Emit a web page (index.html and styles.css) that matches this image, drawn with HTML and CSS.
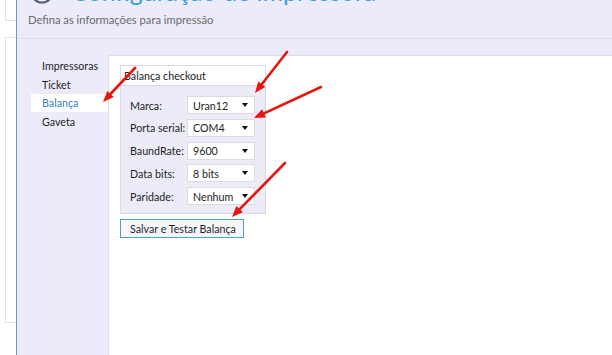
FILE: index.html
```html
<!DOCTYPE html>
<html lang="pt">
<head>
<meta charset="utf-8">
<title>Configuração de impressora</title>
<link rel="stylesheet" href="styles.css">
</head>
<body>
<div class="screen">
  <div class="side">
    <div class="side-box side-top"></div>
    <div class="side-box side-main"></div>
  </div>
  <div class="window">
    <header class="header">
      <div class="title-row">
        <svg class="title-icon" width="24" height="24" viewBox="0 0 24 24"><circle cx="12" cy="12" r="10.5" fill="none" stroke="#4f5f72" stroke-width="2"/></svg>
        <h1 class="title">Configuração de impressora</h1>
      </div>
      <p class="subtitle">Defina as informações para impressão</p>
    </header>
    <div class="body">
      <nav class="nav">
        <div class="nav-item">Impressoras</div>
        <div class="nav-item">Ticket</div>
        <div class="nav-item active">Balança</div>
        <div class="nav-item">Gaveta</div>
      </nav>
      <div class="main">
        <div class="strip"></div>
        <div class="content">
          <section class="group">
            <div class="group-head">Balança checkout</div>
            <div class="group-body">
              <div class="row"><span class="label">Marca:</span><div class="combo"><span>Uran12</span><i class="caret"></i></div></div>
              <div class="row"><span class="label">Porta serial:</span><div class="combo"><span>COM4</span><i class="caret"></i></div></div>
              <div class="row"><span class="label">BaundRate:</span><div class="combo"><span>9600</span><i class="caret"></i></div></div>
              <div class="row"><span class="label">Data bits:</span><div class="combo"><span>8 bits</span><i class="caret"></i></div></div>
              <div class="row"><span class="label">Paridade:</span><div class="combo"><span>Nenhum</span><i class="caret"></i></div></div>
            </div>
          </section>
          <button class="btn">Salvar e Testar Balança</button>
        </div>
      </div>
    </div>
  </div>
  <svg class="arrows" width="612" height="355" viewBox="0 0 612 355">
    <g stroke="#e8150e" stroke-width="2.6" stroke-linecap="round" fill="none">
      <line x1="287" y1="52" x2="261.8" y2="84.3"/>
      <line x1="321" y1="87" x2="264" y2="113.4"/>
      <line x1="135" y1="68" x2="110.5" y2="94"/>
      <line x1="285" y1="163" x2="239.7" y2="209.2"/>
    </g>
    <g fill="#e8150e">
      <polygon points="265.3,87.1 258.2,81.6 255,93"/>
      <polygon points="265.9,117.5 262.1,109.3 254,118"/>
      <polygon points="113.8,97.1 107.3,90.9 103,102"/>
      <polygon points="242.9,212.3 236.5,206 232,217"/>
    </g>
  </svg>
</div>
</body>
</html>
```
FILE: styles.css
```css
* { box-sizing: border-box; }
html, body { margin: 0; padding: 0; }
body {
  width: 612px;
  height: 355px;
  overflow: hidden;
  background: #ffffff;
  font-family: Lato, "Open Sans", sans-serif;
  font-size: 10.7px;
  color: #1e1e1e;
}
.screen {
  position: relative;
  display: flex;
  width: 612px;
  height: 355px;
}
.side {
  width: 16px;
  flex: none;
  display: flex;
  flex-direction: column;
  padding-left: 5px;
}
.side-box { border-left: 1px solid #e2e2e2; }
.side-top { height: 21px; border-bottom: 1px solid #e2e2e2; }
.side-main {
  margin-top: 16px;
  height: 286px;
  border-top: 1px solid #e6e6e6;
  border-bottom: 1px solid #e2e2e2;
}
.window {
  flex: 1;
  display: flex;
  flex-direction: column;
  background: #ebebfa;
  border-left: 1px solid #5d9ed3;
}
.header {
  height: 39px;
  flex: none;
  border-bottom: 1px solid #dcdcea;
  padding-left: 11px;
  overflow: hidden;
}
.title-row {
  display: flex;
  align-items: flex-start;
  height: 30px;
  margin-top: -24px;
  margin-left: 2px;
}
.title-icon { flex: none; margin-top: 4px; }
.title {
  margin: 0 0 0 17px;
  font-weight: 400;
  font-size: 25px;
  line-height: 30px;
  color: #3d9fd8;
  white-space: nowrap;
}
.subtitle {
  margin: 7px 0 0 0;
  color: #6a6a6a;
  font-size: 11.2px;
  line-height: 14px;
  white-space: nowrap;
}
.body {
  flex: 1;
  display: flex;
}
.nav {
  width: 91px;
  flex: none;
  padding: 17px 0 0 14px;
  display: flex;
  flex-direction: column;
}
.nav-item {
  height: 19px;
  line-height: 19px;
  padding-left: 11px;
  color: #1e1e1e;
  white-space: nowrap;
}
.nav-item.active {
  background: #ffffff;
  color: #2f7fc8;
  height: 18px;
  line-height: 18px;
}
.main {
  flex: 1;
  display: flex;
  flex-direction: column;
}
.strip { height: 16px; flex: none; }
.content {
  flex: 1;
  background: #ffffff;
  border-top: 1px solid #dcdcea;
  border-left: 1px solid #dcdcea;
  padding: 9px 0 0 11px;
  display: flex;
  flex-direction: column;
  align-items: flex-start;
}
.group { width: 146px; }
.group-head {
  height: 20px;
  line-height: 19px;
  padding-left: 3px;
  background: #ffffff;
  border: 1px solid #d8d8e4;
  border-bottom: none;
  white-space: nowrap;
}
.group-body {
  background: #ececf9;
  border: 1px solid #d8d8e4;
  padding: 10px 0 8px 9px;
  display: flex;
  flex-direction: column;
  gap: 4.8px;
}
.row {
  display: flex;
  align-items: center;
  height: 18px;
}
.label { width: 57px; flex: none; white-space: nowrap; }
.combo {
  width: 68px;
  height: 18px;
  background: #ffffff;
  border: 1px solid #dcdcdc;
  display: flex;
  align-items: center;
  justify-content: space-between;
  padding: 0 6px 0 5px;
  white-space: nowrap;
}
.caret {
  width: 0;
  height: 0;
  border-left: 3.5px solid transparent;
  border-right: 3.5px solid transparent;
  border-top: 4px solid #111;
}
.btn {
  margin-top: 5px;
  width: 124px;
  height: 19px;
  padding: 0 0 0 9px;
  text-align: left;
  font-family: inherit;
  font-size: 10.7px;
  color: #1e1e1e;
  background: #f7f7fc;
  border: 1px solid #4d9fd6;
  border-radius: 0;
  white-space: nowrap;
}
.arrows {
  position: absolute;
  left: 0;
  top: 0;
  pointer-events: none;
}
```
